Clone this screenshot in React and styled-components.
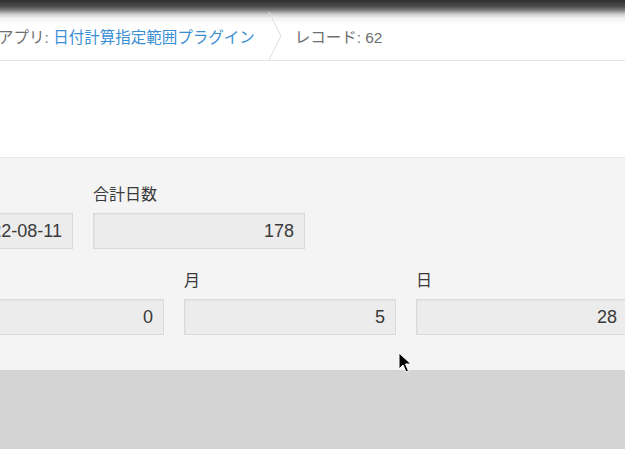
import React from 'react';
import styled, { createGlobalStyle } from 'styled-components';

const GlobalStyle = createGlobalStyle`
  html, body {
    margin: 0;
    padding: 0;
    background: #ffffff;
    overflow: hidden;
  }
  body {
    font-family: "Liberation Sans", "Noto Sans CJK JP", sans-serif;
  }
`;

const Page = styled.div`
  position: relative;
  width: 625px;
  height: 449px;
  overflow: hidden;
  display: flex;
  flex-direction: column;
  background: #ffffff;
`;

const TopBar = styled.div`
  height: 61px;
  border-bottom: 1px solid #e4e4e4;
  background: linear-gradient(
    #2f2f2f 0px,
    #4a4a4a 6px,
    #7a7a7a 10px,
    #c9c9c9 14px,
    #f2f2f2 18px,
    #ffffff 24px
  );
  display: flex;
  align-items: stretch;
  padding-top: 12px;
  box-sizing: border-box;
  flex-shrink: 0;
`;

const Crumbs = styled.div`
  display: flex;
  align-items: center;
  margin-left: -2px;
  font-size: 15.5px;
  color: #6f6f6f;
  white-space: nowrap;
`;

const Crumb = styled.span`
  display: inline-flex;
  align-items: center;
  margin-top: -1px;
`;

const Link = styled.span`
  color: #3a8ed3;
`;

const Chevron = styled.svg`
  align-self: stretch;
  width: 16px;
  height: 48px;
  margin: 0 12px 0 12px;
  flex-shrink: 0;
`;

const WhiteGap = styled.div`
  height: 96px;
  flex-shrink: 0;
`;

const Panel = styled.div`
  height: 213px;
  border-top: 1px solid #e6e6e6;
  background: #f4f4f4;
  padding-top: 27px;
  box-sizing: border-box;
  display: flex;
  flex-direction: column;
  gap: 22px;
  flex-shrink: 0;
`;

const Row = styled.div`
  display: flex;
  gap: 20px;
  margin-left: ${(props) => props.offset}px;
`;

const Field = styled.div`
  display: flex;
  flex-direction: column;
  width: 212px;
  flex-shrink: 0;
`;

const Label = styled.div`
  height: 20px;
  line-height: 20px;
  font-size: 16px;
  color: #3a3a3a;
  margin-bottom: 8px;
`;

const Value = styled.div`
  height: 36px;
  box-sizing: border-box;
  border: 1px solid #dadada;
  background: #ececec;
  box-shadow: inset 1px 1px 1px rgba(0, 0, 0, 0.03);
  display: flex;
  align-items: center;
  justify-content: flex-end;
  padding-right: 10px;
  font-size: 18px;
  color: #3a3a3a;
`;

const Footer = styled.div`
  flex: 1;
  background: #d3d4d3;
`;

const Cursor = styled.svg`
  position: absolute;
  left: 398px;
  top: 352px;
  width: 14px;
  height: 22px;
`;

const rows = [
  {
    offset: -139,
    fields: [
      { label: '', value: '2022-08-11' },
      { label: '合計日数', value: '178' },
    ],
  },
  {
    offset: -48,
    fields: [
      { label: '', value: '0' },
      { label: '月', value: '5' },
      { label: '日', value: '28' },
    ],
  },
];

const App = () => (
  <Page>
    <GlobalStyle />
    <TopBar>
      <Crumbs>
        <Crumb>
          アプリ:&nbsp;<Link>日付計算指定範囲プラグイン</Link>
        </Crumb>
        <Chevron viewBox="0 0 16 48">
          <polyline
            points="2,0 14,24 2,48"
            fill="none"
            stroke="#dedede"
            strokeWidth="1"
          />
        </Chevron>
        <Crumb>レコード: 62</Crumb>
      </Crumbs>
    </TopBar>
    <WhiteGap />
    <Panel>
      {rows.map((row, i) => (
        <Row key={i} offset={row.offset}>
          {row.fields.map((field, j) => (
            <Field key={j}>
              <Label>{field.label}</Label>
              <Value>{field.value}</Value>
            </Field>
          ))}
        </Row>
      ))}
    </Panel>
    <Footer />
    <Cursor viewBox="0 0 14 22">
      <path
        d="M1 1 L1 17 L5 13 L8 20 L10.5 19 L7.5 12 L13 12 Z"
        fill="#000000"
        stroke="#ffffff"
        strokeWidth="1"
        strokeLinejoin="round"
      />
    </Cursor>
  </Page>
);

export default App;
